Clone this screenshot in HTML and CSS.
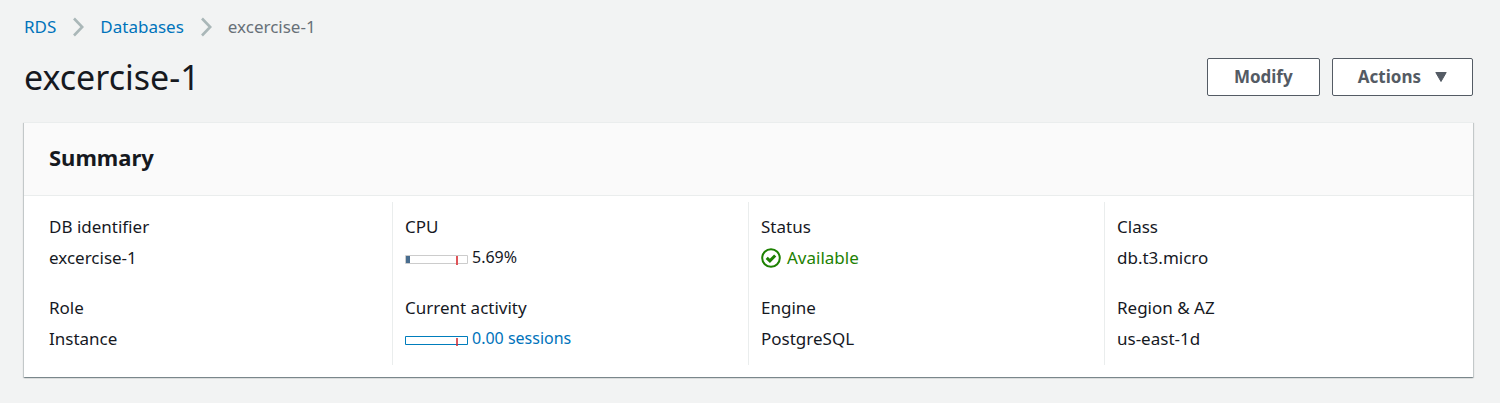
FILE: index.html
```html
<!DOCTYPE html>
<html lang="en">
<head>
<meta charset="utf-8">
<title>RDS - excercise-1</title>
<link rel="stylesheet" href="styles.css">
</head>
<body>
<nav class="breadcrumbs" aria-label="Breadcrumbs">
  <a href="#rds">RDS</a>
  <svg class="chevron" viewBox="0 0 12 20" aria-hidden="true"><path d="M2 1.5 10.2 10 2 18.5"/></svg>
  <a href="#databases">Databases</a>
  <svg class="chevron" viewBox="0 0 12 20" aria-hidden="true"><path d="M2 1.5 10.2 10 2 18.5"/></svg>
  <span class="current">excercise-1</span>
</nav>
<header class="page-header">
  <h1>excercise-1</h1>
  <div class="actions">
    <button type="button" class="button">Modify</button>
    <button type="button" class="button">Actions
      <svg class="caret" viewBox="0 0 12 10" aria-hidden="true"><path d="M.8.5h10.4L6 9.5z"/></svg>
    </button>
  </div>
</header>
<main class="card">
  <div class="card-header"><h2>Summary</h2></div>
  <div class="columns">
    <dl class="column">
      <div class="field"><dt>DB identifier</dt><dd>excercise-1</dd></div>
      <div class="field"><dt>Role</dt><dd>Instance</dd></div>
    </dl>
    <dl class="column">
      <div class="field"><dt>CPU</dt><dd class="metric">
        <svg class="meter" viewBox="0 -4 63 14" aria-hidden="true"><path class="meter-frame" d="M.5.5h62v8H.5z"/><path d="M1 1h4v7H1z" fill="#486d8f"/><path d="M51 1h2v9h-2z" fill="#df5458"/></svg>
        <span>5.69%</span></dd></div>
      <div class="field"><dt>Current activity</dt><dd>
        <a class="metric" href="#sessions"><svg class="meter" viewBox="0 -4 63 14" aria-hidden="true"><path class="meter-frame meter-frame-link" d="M.5.5h62v8H.5z"/><path d="M51 2h2v8h-2z" fill="#d13038" fill-opacity=".8"/></svg>
        <span>0.00 sessions</span></a></dd></div>
    </dl>
    <dl class="column">
      <div class="field"><dt>Status</dt><dd class="status">
        <svg class="check" viewBox="0 0 20 20" aria-hidden="true"><circle cx="10" cy="10" r="8.8"/><path d="m5.7 9.8 3.2 3.1 5.3-5.4"/></svg>
        <span>Available</span></dd></div>
      <div class="field"><dt>Engine</dt><dd>PostgreSQL</dd></div>
    </dl>
    <dl class="column">
      <div class="field"><dt>Class</dt><dd>db.t3.micro</dd></div>
      <div class="field"><dt>Region &amp; AZ</dt><dd>us-east-1d</dd></div>
    </dl>
  </div>
</main>
</body>
</html>
```
FILE: styles.css
```css
* {
  box-sizing: border-box;
}

body {
  margin: 0;
  padding: 13px 27px 24px 24px;
  background: #f2f3f3;
  color: #16191f;
  font: 17px/27px "Noto Sans", "Open Sans", sans-serif;
}

h1, h2, dl, dd {
  margin: 0;
}

a {
  color: #0073bb;
  text-decoration: none;
}

.breadcrumbs {
  display: flex;
  align-items: center;
  gap: 16px;
  line-height: 28px;
}

.chevron {
  width: 12px;
  height: 20px;
  fill: none;
  stroke: #aab7b8;
  stroke-width: 2.6;
}

.current {
  color: #687078;
}

.page-header {
  display: flex;
  align-items: center;
  justify-content: space-between;
  padding: 13px 0 22px;
}

h1 {
  font-size: 34px;
  font-weight: 400;
  line-height: 46px;
}

.actions {
  display: flex;
  gap: 12px;
}

.button {
  display: flex;
  align-items: center;
  justify-content: center;
  gap: 14px;
  min-width: 113px;
  padding: 4px 25px;
  border: 1px solid #545b64;
  border-radius: 2px;
  background: #fff;
  color: #545b64;
  font: 700 17px/28px "Noto Sans", "Open Sans", sans-serif;
}

.caret {
  width: 12px;
  height: 10px;
  fill: #545b64;
  stroke: #545b64;
  stroke-linejoin: round;
}

.card {
  background: #fff;
  box-shadow: 0 1px 1px 0 rgba(0, 28, 36, .3), 1px 1px 1px 0 rgba(0, 28, 36, .15), -1px 1px 1px 0 rgba(0, 28, 36, .15);
}

.card-header {
  padding: 18px 25px 22px;
  background: #fafafa;
  border-top: 1px solid #eaeded;
  border-bottom: 1px solid #eaeded;
}

h2 {
  font-size: 22px;
  font-weight: 700;
  line-height: 32px;
}

.columns {
  display: grid;
  grid-template-columns: repeat(4, 1fr);
  padding: 6px 13px 12px 12px;
}

.column {
  display: grid;
  gap: 23px;
  padding: 11px 12px 13px;
  border-left: 1px solid #eaeded;
}

.column:first-child {
  border-color: transparent;
}

.field {
  display: grid;
  gap: 4px;
}

.metric {
  display: flex;
  align-items: center;
  gap: 4px;
  font-size: 16px;
}

.meter {
  width: 63px;
  height: 14px;
}

.meter-frame {
  fill: #fff;
  stroke: #ccc;
}

.meter-frame-link {
  stroke: #007dbc;
}

.status {
  display: flex;
  align-items: center;
  gap: 6px;
  color: #1d8102;
}

.check {
  width: 20px;
  height: 20px;
  fill: none;
  stroke: #1d8102;
  stroke-width: 2;
}

.check path {
  stroke-width: 3;
}
```
